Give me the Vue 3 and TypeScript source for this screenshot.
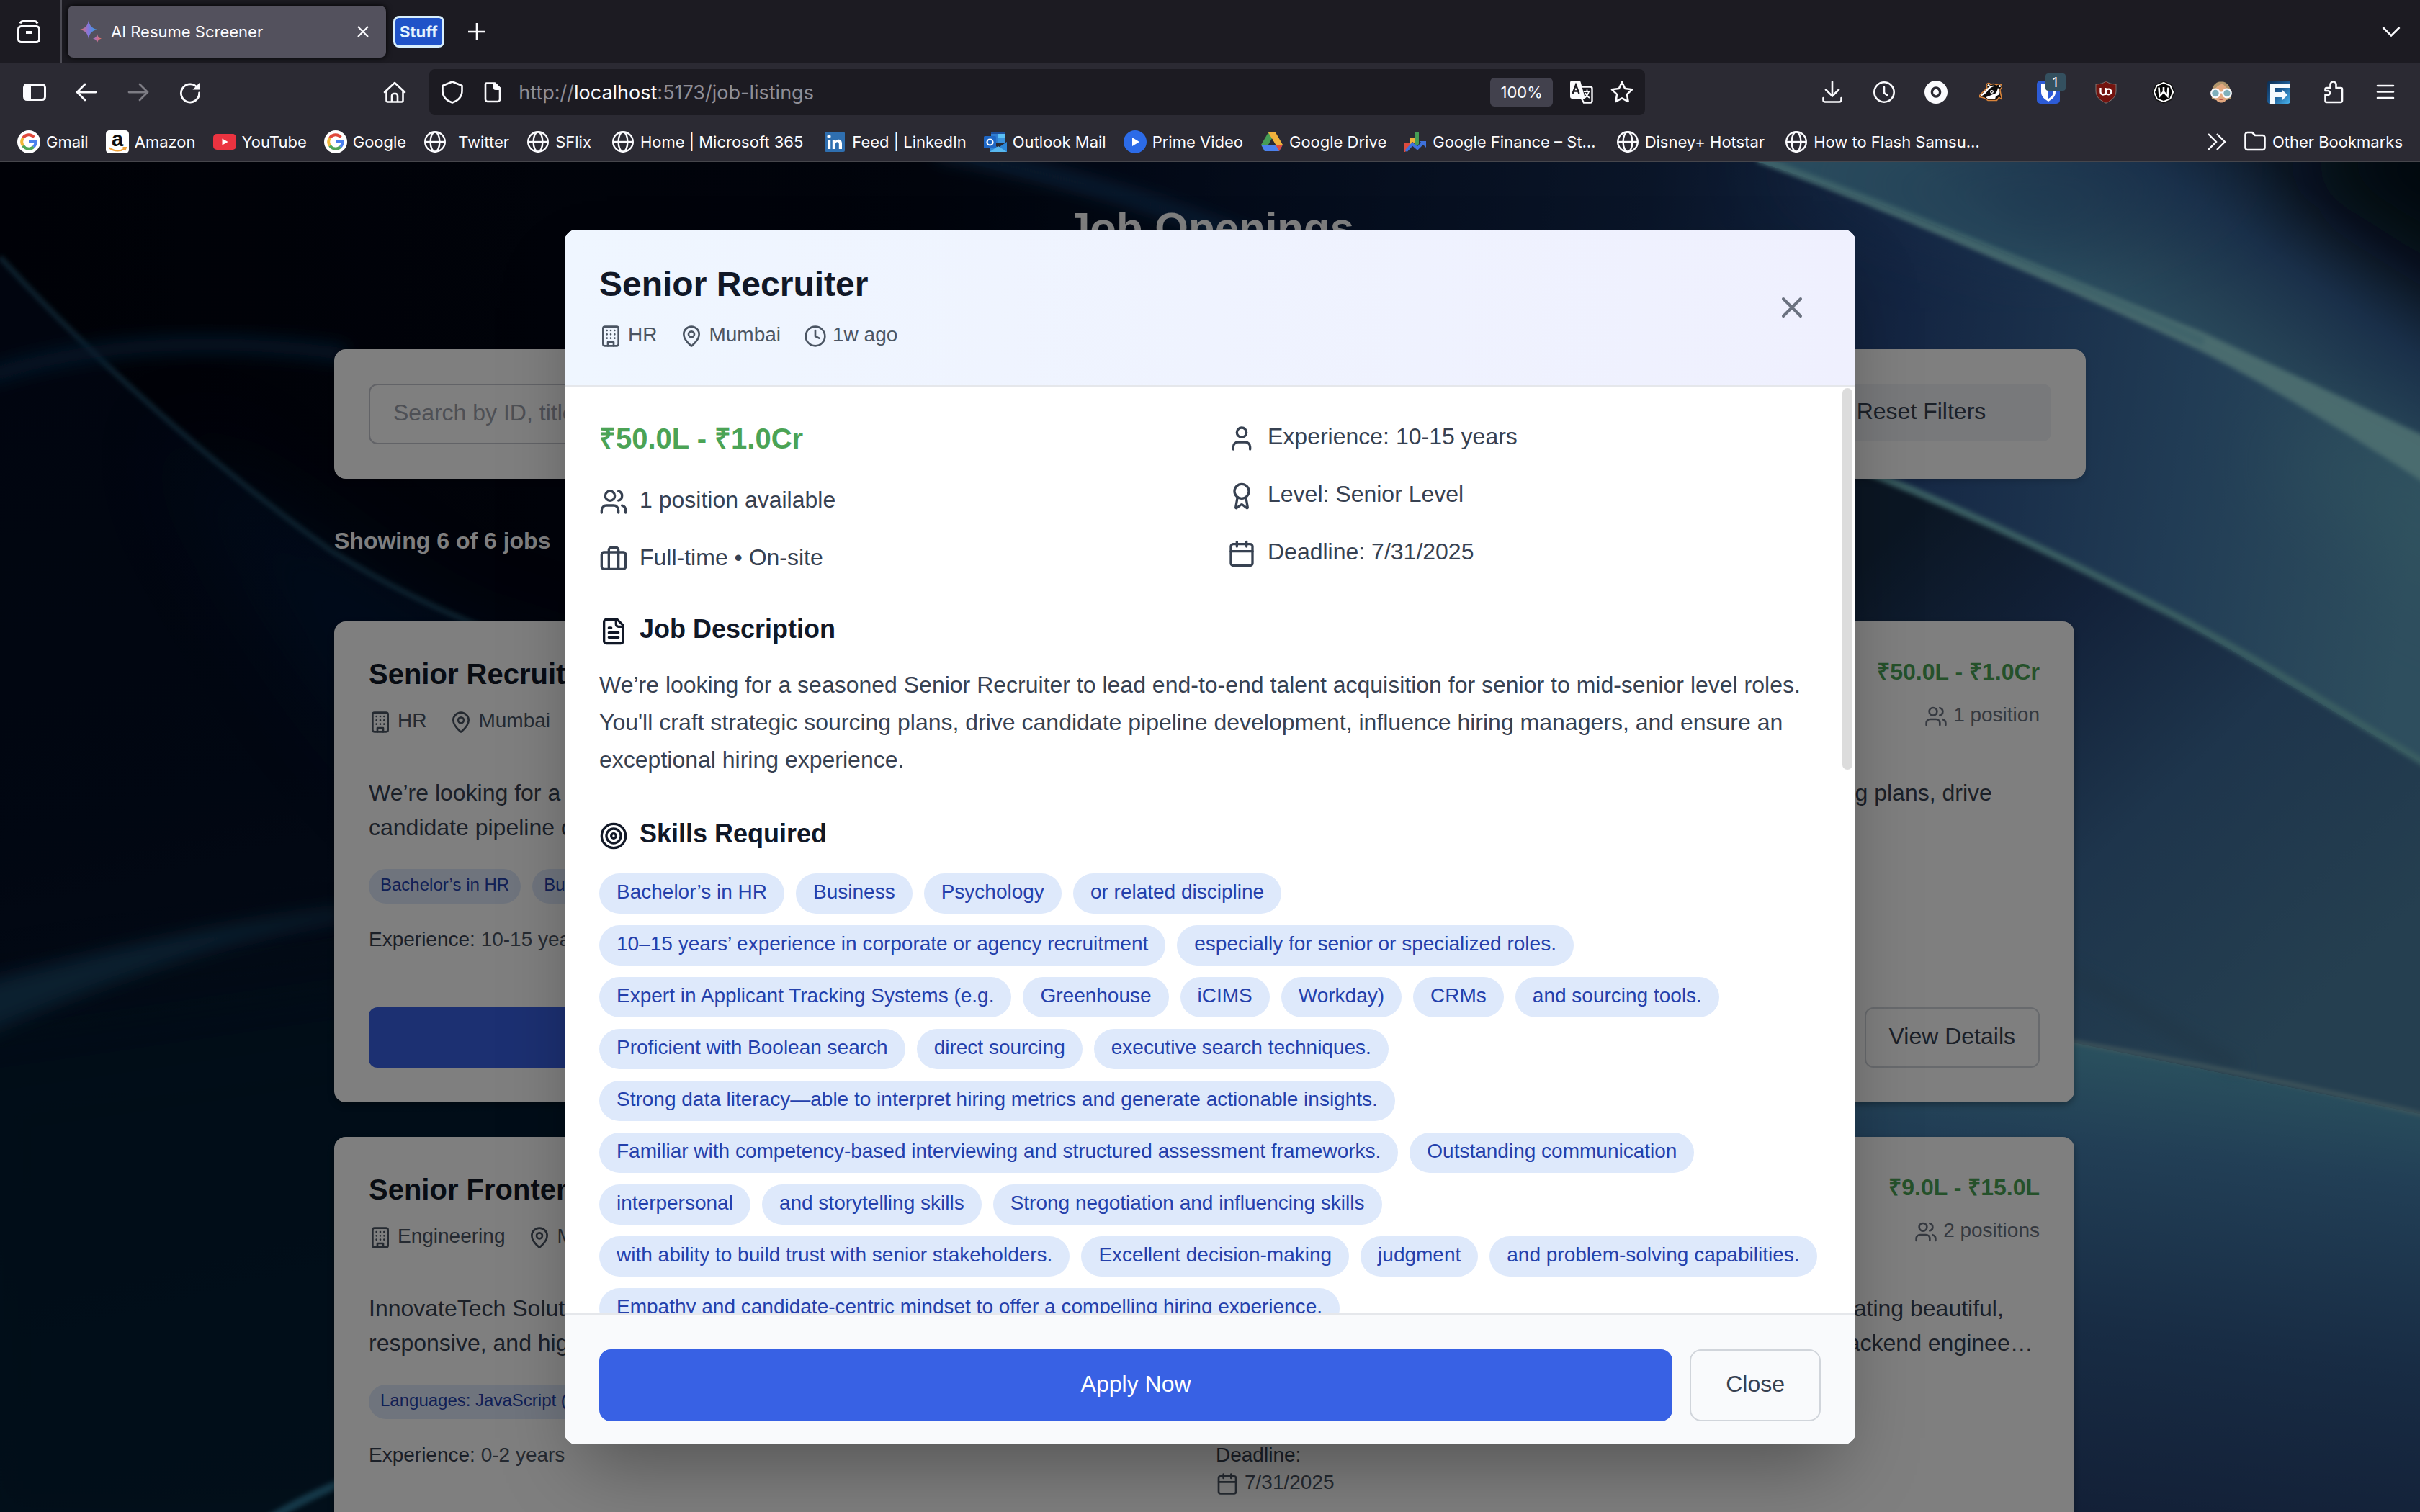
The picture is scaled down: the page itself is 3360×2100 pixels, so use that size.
<script setup lang="ts">
import { ref } from 'vue'

interface Bookmark {
  label: string
  icon: string
  wide?: boolean
  trail?: boolean
}

interface Job {
  title: string
  department: string
  location: string
  salary: string
  positions: string
  summary: string
  skills: string[]
  experience: string
  deadline: string
}

const globe =
  '<g fill="none" stroke="#fbfbfe" stroke-width="2.4"><circle cx="16" cy="16" r="13.8"/><ellipse cx="16" cy="16" rx="6.4" ry="13.8"/><path d="M2.5 16h27"/></g>'
const googleG =
  '<circle cx="16" cy="16" r="16" fill="#fff"/><g fill="none" stroke-width="4"><path d="M23.2 9.6A9.6 9.6 0 0 0 8 10.6" stroke="#e0493b"/><path d="M8 10.6a9.6 9.6 0 0 0 0 10.8" stroke="#f2b83a"/><path d="M8 21.4a9.6 9.6 0 0 0 14.6 1.6" stroke="#4fa658"/><path d="M22.6 23a9.6 9.6 0 0 0 3-7H16" stroke="#4a80ee"/></g>'

const bookmarks: Bookmark[] = [
  { label: 'Gmail', icon: googleG },
  {
    label: 'Amazon',
    icon: '<rect width="32" height="32" rx="5" fill="#fff"/><text x="16" y="22" text-anchor="middle" font-family="Liberation Sans, sans-serif" font-weight="700" font-size="29" fill="#0d0d0d">a</text><path d="M5 24.500c7 5 15 5 21 1" fill="none" stroke="#f0a138" stroke-width="2.400"/><path d="M23.500 24h4.500l-1.500 4" fill="none" stroke="#f0a138" stroke-width="2"/>',
  },
  {
    label: 'YouTube',
    icon: '<rect y="5" width="32" height="22" rx="5" fill="#eb3340"/><path d="M12.500 11.500v9l8-4.500z" fill="#fff"/>',
  },
  { label: 'Google', icon: googleG },
  { label: 'Twitter', icon: globe, wide: true },
  { label: 'SFlix', icon: globe, trail: true },
  { label: 'Home | Microsoft 365', icon: globe, trail: true },
  {
    label: 'Feed | LinkedIn',
    icon: '<rect x="2" y="2" width="28" height="28" rx="2" fill="#2f6fb0"/><g fill="#fff"><circle cx="8" cy="8.500" r="2.500"/><path d="M6 13h4.200v13H6zM12.800 13h4v1.900c2.300-3.600 9.200-3 9.200 3.300V26h-4.200v-7c0-4-4.800-3.600-4.800 0v7h-4.200z"/></g>',
  },
  {
    label: 'Outlook Mail',
    icon: '<path d="M10 2h20v8H10z" fill="#1d4f9c"/><path d="M10 5h10v12H10z" fill="#2f7cd0"/><path d="M20 5h10v6H20z" fill="#5cc0f5"/><path d="M20 11h10v6H20z" fill="#3a93dd"/><path d="M8 17l12 7 12-8v14H8z" fill="#2d86d6"/><path d="M8 30l12-8 12 8z" fill="#58b7ee"/><rect y="8" width="17" height="17" rx="1.500" fill="#1f67c5"/><circle cx="8.500" cy="16.500" r="4" fill="none" stroke="#fff" stroke-width="2.200"/>',
  },
  {
    label: 'Prime Video',
    icon: '<circle cx="16" cy="16" r="16" fill="#2c6be8"/><path d="M12 10v12l10-6z" fill="#fff"/>',
  },
  {
    label: 'Google Drive',
    icon: '<path d="M11 3h10l-5 9L6 29 1 20z" fill="#469d55"/><path d="M11 3h10l10 17H21z" fill="#f0b13c"/><path d="M1 20h30l-5 9H6z" fill="#4b80ec"/><path d="M21 20h10l-5 9z" fill="#dd4b3e"/><path d="M16 11.500L21 20H11z" fill="#2b2a33"/>',
  },
  {
    label: 'Google Finance – St…',
    icon: '<path d="M1 17h7v7l-6 6H1z" fill="#dd4b3e"/><path d="M8.500 10H15v8l-3-2-3.500 6z" fill="#f0b13c"/><path d="M15 3h6v16l-3 3-3-3z" fill="#469d55"/><path d="M3 29l9-10 7 6 8-8" fill="none" stroke="#3e71dc" stroke-width="4"/><path d="M22 15h9v9z" fill="#3e71dc"/>',
    trail: true,
  },
  { label: 'Disney+ Hotstar', icon: globe, trail: true },
  { label: 'How to Flash Samsu…', icon: globe },
]

/** Outline glyphs on a 24 unit grid. */
const glyphs: Record<string, string> = {
  building:
    '<rect width="16" height="20" x="4" y="2" rx="2"/><path d="M9 22v-4h6v4"/><path d="M8 6h.01M16 6h.01M12 6h.01M12 10h.01M12 14h.01M16 10h.01M16 14h.01M8 10h.01M8 14h.01"/>',
  pin: '<path d="M20 10c0 4.993-5.539 10.193-7.399 11.799a1 1 0 0 1-1.202 0C9.539 20.193 4 14.993 4 10a8 8 0 0 1 16 0"/><circle cx="12" cy="10" r="3"/>',
  clock: '<circle cx="12" cy="12" r="10"/><path d="M12 6v6l4 2"/>',
  users:
    '<path d="M16 21v-2a4 4 0 0 0-4-4H6a4 4 0 0 0-4 4v2"/><circle cx="9" cy="7" r="4"/><path d="M22 21v-2a4 4 0 0 0-3-3.870"/><path d="M16 3.130a4 4 0 0 1 0 7.750"/>',
  briefcase:
    '<path d="M16 20V4a2 2 0 0 0-2-2h-4a2 2 0 0 0-2 2v16"/><rect width="20" height="14" x="2" y="6" rx="2"/>',
  user: '<path d="M19 21v-2a4 4 0 0 0-4-4H9a4 4 0 0 0-4 4v2"/><circle cx="12" cy="7" r="4"/>',
  award:
    '<path d="m15.477 12.890 1.515 8.526a.5.5 0 0 1-.81.470l-3.580-2.687a1 1 0 0 0-1.197 0l-3.586 2.686a.5.5 0 0 1-.81-.469l1.514-8.526"/><circle cx="12" cy="8" r="6"/>',
  calendar: '<path d="M8 2v4M16 2v4"/><rect width="18" height="18" x="3" y="4" rx="2"/><path d="M3 10h18"/>',
  file: '<path d="M15 2H6a2 2 0 0 0-2 2v16a2 2 0 0 0 2 2h12a2 2 0 0 0 2-2V7Z"/><path d="M14 2v4a2 2 0 0 0 2 2h4M10 9H8M16 13H8M16 17H8"/>',
  target: '<circle cx="12" cy="12" r="10"/><circle cx="12" cy="12" r="6"/><circle cx="12" cy="12" r="2"/>',
  close: '<path d="M18 6 6 18M6 6l12 12"/>',
}

const facts = [
  { icon: 'user', text: 'Experience: 10-15 years' },
  { icon: 'award', text: 'Level: Senior Level' },
  { icon: 'calendar', text: 'Deadline: 7/31/2025' },
]

const description =
  "We’re looking for a seasoned Senior Recruiter to lead end-to-end talent acquisition for senior to mid-senior level roles. You'll craft strategic sourcing plans, drive candidate pipeline development, influence hiring managers, and ensure an exceptional hiring experience."

const skills = [
  'Bachelor’s in HR',
  'Business',
  'Psychology',
  'or related discipline',
  '10–15 years’ experience in corporate or agency recruitment',
  'especially for senior or specialized roles.',
  'Expert in Applicant Tracking Systems (e.g.',
  'Greenhouse',
  'iCIMS',
  'Workday)',
  'CRMs',
  'and sourcing tools.',
  'Proficient with Boolean search',
  'direct sourcing',
  'executive search techniques.',
  'Strong data literacy—able to interpret hiring metrics and generate actionable insights.',
  'Familiar with competency-based interviewing and structured assessment frameworks.',
  'Outstanding communication',
  'interpersonal',
  'and storytelling skills',
  'Strong negotiation and influencing skills',
  'with ability to build trust with senior stakeholders.',
  'Excellent decision-making',
  'judgment',
  'and problem-solving capabilities.',
  'Empathy and candidate-centric mindset to offer a compelling hiring experience.',
]

const jobs: Job[] = [
  {
    title: 'Senior Recruiter',
    department: 'HR',
    location: 'Mumbai',
    salary: '₹50.0L - ₹1.0Cr',
    positions: '1 position',
    summary: description,
    skills: ['Bachelor’s in HR', 'Business', 'Psychology'],
    experience: '10-15 years',
    deadline: '7/31/2025',
  },
  {
    title: 'Senior Frontend Developer',
    department: 'Engineering',
    location: 'Mumbai',
    salary: '₹9.0L - ₹15.0L',
    positions: '2 positions',
    summary:
      'InnovateTech Solutions is looking for a talented and passionate Senior Frontend Developer to join our growing product team. You will focus on creating beautiful, responsive, and high-performance web applications, collaborating closely with our talented product managers, analysts, product designers, and backend engineers to deliver features.',
    skills: ['Languages: JavaScript (ES6+)', 'TypeScript'],
    experience: '0-2 years',
    deadline: '7/31/2025',
  },
]

const query = ref('')
</script>

<template>
  <div class="browser">
    <header class="chrome">
      <div class="tabs">
        <button class="view-btn" aria-label="Recent browsing">
          <svg width="32" height="32" viewBox="0 0 32 32" fill="none" stroke="#fbfbfe" stroke-width="3">
            <rect x="1.500" y="8.500" width="29" height="22" rx="4" />
            <path d="M4 4.500C5 2 6 1.500 8 1.500h16c2 0 3 .5 4 3" />
            <path d="M12 17h8" stroke-width="4" />
          </svg>
        </button>
        <div class="tab">
          <svg width="32" height="32" viewBox="0 0 32 32">
            <defs>
              <linearGradient id="spark"><stop offset="0" stop-color="#e8705c" /><stop offset=".45" stop-color="#8a74d8" /><stop offset=".8" stop-color="#4a90e0" /></linearGradient>
              <linearGradient id="spark2"><stop offset="0" stop-color="#9a70d0" /><stop offset="1" stop-color="#e8705c" /></linearGradient>
            </defs>
            <path d="M13 0c1.500 8 4 11 12 13-8 2-10.500 5-12 13C11.500 18 9 15 1 13 9 11 11.500 8 13 0z" fill="url(#spark)" />
            <path d="M25 19c.8 4 2 5.500 6 6.500-4 1-5.200 2.500-6 6.500-.8-4-2-5.500-6-6.500 4-1 5.200-2.500 6-6.500z" fill="url(#spark2)" />
          </svg>
          <span class="tab-title">AI Resume Screener</span>
          <button aria-label="Close tab">
            <svg width="16" height="16" viewBox="0 0 16 16" fill="none" stroke="#fbfbfe" stroke-width="2.200"><path d="M1 1l14 14M15 1L1 15" /></svg>
          </button>
        </div>
        <button class="group">Stuff</button>
        <button class="new-tab" aria-label="New tab">
          <svg width="24" height="24" viewBox="0 0 24 24" fill="none" stroke="#fbfbfe" stroke-width="2.600"><path d="M12 0v24M0 12h24" /></svg>
        </button>
        <button class="all-tabs" aria-label="List all tabs">
          <svg width="26" height="16" viewBox="0 0 26 16" fill="none" stroke="#fbfbfe" stroke-width="2.600"><path d="M1.500 2l11.500 11.500L24.500 2" /></svg>
        </button>
      </div>

      <div class="nav">
        <button class="tool" aria-label="Sidebars">
          <svg width="32" height="32" viewBox="0 0 32 32"><rect x="1.500" y="5.500" width="29" height="21" rx="4" fill="none" stroke="#fbfbfe" stroke-width="3" /><path d="M2 5h9v22H5l-3-3z" fill="#fbfbfe" /></svg>
        </button>
        <button class="tool" aria-label="Back">
          <svg width="32" height="32" viewBox="0 0 32 32" fill="none" stroke="#fbfbfe" stroke-width="2.800" stroke-linecap="round" stroke-linejoin="round"><path d="M29 16H3M14 5L3 16l11 11" /></svg>
        </button>
        <button class="tool" aria-label="Forward">
          <svg width="32" height="32" viewBox="0 0 32 32" fill="none" stroke="#7d7c84" stroke-width="2.800" stroke-linecap="round" stroke-linejoin="round"><path d="M3 16h26M18 5l11 11-11 11" /></svg>
        </button>
        <button class="tool" aria-label="Reload">
          <svg width="32" height="32" viewBox="0 0 32 32"><path d="M26.500 10.500A12.600 12.600 0 1 0 28.600 17" fill="none" stroke="#fbfbfe" stroke-width="2.800" stroke-linecap="round" /><path d="M30 2v10.500H19.500z" fill="#fbfbfe" /></svg>
        </button>
        <span class="spring"></span>
        <button class="tool home" aria-label="Home">
          <svg width="32" height="32" viewBox="0 0 32 32" fill="none" stroke="#fbfbfe" stroke-width="2.600" stroke-linejoin="round" stroke-linecap="round"><path d="M2 16L16 3l14 13M4.500 14v13.500a2 2 0 0 0 2 2h19a2 2 0 0 0 2-2V14M12 29V21a3 3 0 0 1 3-3h2a3 3 0 0 1 3 3v8" /></svg>
        </button>
        <div class="url">
          <svg width="32" height="32" viewBox="0 0 32 32" fill="none" stroke="#fbfbfe" stroke-width="2.600" stroke-linejoin="round"><path d="M16 1.500L29.500 7v7c0 8-5 13.500-13.500 16.500C7.500 27.500 2.500 22 2.500 14V7z" /></svg>
          <svg width="32" height="32" viewBox="0 0 32 32"><path d="M7 3.500h12l7 7V26a3 3 0 0 1-3 3H9a3 3 0 0 1-3-3V5z" fill="none" stroke="#fbfbfe" stroke-width="2.600" stroke-linejoin="round" /><path d="M17 3h3l7 7v3h-7a3 3 0 0 1-3-3z" fill="#fbfbfe" /></svg>
          <span class="address">http://<b>localhost</b>:5173/job-listings</span>
          <button class="zoom">100%</button>
          <svg width="32" height="32" viewBox="0 0 32 32"><path d="M3 0h9a3 3 0 0 1 2.500 1.500L21 25H3a3 3 0 0 1-3-3V3a3 3 0 0 1 3-3z" fill="#fbfbfe" /><path d="M3.500 18L8 6l4.500 12M5 14.500h6" fill="none" stroke="#1c1b22" stroke-width="2.400" /><path d="M17 8.500h11a2.500 2.500 0 0 1 2.500 2.500v17a2.500 2.500 0 0 1-2.500 2.500H19L16 25" fill="none" stroke="#fbfbfe" stroke-width="2.400" /><path d="M19 15h9M23.500 12.500V15M26 15c-1 4-3 7-6 9M21 17c1 3 3 5 6 7" fill="none" stroke="#fbfbfe" stroke-width="1.800" /></svg>
          <svg class="star" width="32" height="32" viewBox="0 0 32 32" fill="none" stroke="#fbfbfe" stroke-width="2.600" stroke-linejoin="round"><path d="M16 2l4.200 9 9.800 1.300-7.100 6.800 1.700 9.900-8.600-4.700L7.400 29l1.700-9.900L2 12.300 11.800 11z" /></svg>
        </div>
        <span class="spring"></span>
        <div class="tools">
          <button class="tool" aria-label="Downloads">
            <svg width="32" height="32" viewBox="0 0 32 32" fill="none" stroke="#fbfbfe" stroke-width="2.600" stroke-linecap="round" stroke-linejoin="round"><path d="M16 1.500v19M7 12.500l9 9 9-9M3.500 24v3a2.500 2.500 0 0 0 2.500 2.500h20a2.500 2.500 0 0 0 2.500-2.500v-3" /></svg>
          </button>
          <button class="tool" aria-label="History">
            <svg width="32" height="32" viewBox="0 0 32 32" fill="none" stroke="#fbfbfe" stroke-width="2.600" stroke-linecap="round"><circle cx="16" cy="16" r="13.700" /><path d="M16 9v8l4.500 3.500" /></svg>
          </button>
          <button class="tool" aria-label="Account">
            <svg width="32" height="32" viewBox="0 0 32 32"><circle cx="16" cy="16" r="16" fill="#fbfbfe" /><ellipse cx="16" cy="16" rx="5.600" ry="6" fill="none" stroke="#2b2a33" stroke-width="3.400" /></svg>
          </button>
          <button class="tool ext" aria-label="Privacy Badger">
            <svg width="32" height="32" viewBox="0 0 32 32"><path d="M10 7c0-4 4-4.500 6-1.500 3-1.500 6-1 8 .5 2-2 7-2 7.500 1.500.3 3-2 4-2.500 5l1 7 1.500 6.500-4-3-3 4.500H12L7 24l-6.500-1.500C-.5 20 2 19 5 16l6-6z" fill="#0d0d0d" stroke="#d9843b" stroke-width="1.500" /><path d="M2 20.500L12 10c4-3 7-4 11-2.500-4 .5-7 2-10 5-3 4-6 8-11 9z" fill="#fff" /><path d="M12 22c3-1 6-3 8-3 4-1 5-5 6-9 2 2 3 5 2 9l-5 3-1 4h-9l-4-3z" fill="#fff" /><circle cx="13" cy="6.500" r="1.600" fill="#fff" /><circle cx="28.500" cy="7.500" r="1.600" fill="#fff" /><circle cx="17.500" cy="15.500" r="2.400" fill="#fff" /><circle cx="17.500" cy="15.500" r="1.100" fill="#111" /></svg>
          </button>
          <button class="tool ext" aria-label="Bitwarden">
            <svg width="32" height="32" viewBox="0 0 32 32"><rect width="32" height="32" rx="5" fill="#2c5bd6" /><path d="M6 4h20v12c0 6-5 10-10 13C11 26 6 22 6 16z" fill="#fff" /><path d="M16 7.500h7V16c0 4-3.500 7-7 9z" fill="#2c5bd6" /></svg>
            <span class="badge">1</span>
          </button>
          <button class="tool ext" aria-label="uBlock Origin">
            <svg width="32" height="32" viewBox="0 0 32 32"><path d="M16 .8C20 4 25 5 30 5v9c0 9-6 13.500-14 17.200C8 27.500 2 23 2 14V5c5 0 10-1 14-4.200z" fill="#74140f" stroke="#8c8a88" stroke-width=".8" /><path d="M8.500 10v6a3.500 3.500 0 0 0 7 0v-6M15.500 16v4" fill="none" stroke="#fff" stroke-width="2.300" /><circle cx="19.500" cy="15.500" r="3.800" fill="none" stroke="#fff" stroke-width="2.300" /></svg>
          </button>
          <button class="tool ext" aria-label="Web archive">
            <svg width="32" height="32" viewBox="0 0 32 32"><path d="M16 1l10.500 4.500L31 16l-4.500 10.500L16 31 5.500 26.500 1 16 5.500 5.500z" fill="#fff" stroke="#111" stroke-width="1.500" /><path d="M16 4l8.500 3.500L28 16l-3.500 8.500L16 28l-8.500-3.500L4 16l3.500-8.500z" fill="#050505" /><path d="M9.500 9.500l1 12 5.500-6 5.500 6 1-12M16 9v7" fill="none" stroke="#fff" stroke-width="2.600" /></svg>
          </button>
          <button class="tool ext" aria-label="Avatar">
            <svg width="32" height="32" viewBox="0 0 32 32"><path d="M3 25C1 8 8 1 16 1.500 24 1 31 8 29 25l-5 2H8z" fill="#b0956c" /><path d="M7 14C9 7 14 6 18 4c2 3 6 5 7 10v9c-2 5-5 7.500-9 7.500S9 28 7 23z" fill="#e2a87f" /><path d="M12.500 26c2 1.200 5 1.200 7 0z" fill="#b54848" /><g fill="#7fb0bb" stroke="#fbfbfe" stroke-width="2.200"><circle cx="8" cy="17.500" r="5.800" /><circle cx="24" cy="17.500" r="5.800" /></g><path d="M13.500 16.500h5" stroke="#fbfbfe" stroke-width="2.200" /></svg>
          </button>
          <button class="tool ext" aria-label="Forward">
            <svg width="32" height="32" viewBox="0 0 32 32"><defs><linearGradient id="fx" x1="0" y1="0" x2="1" y2="1"><stop offset="0" stop-color="#0c2c50" /><stop offset=".5" stop-color="#1c5a93" /><stop offset="1" stop-color="#4ab6f0" /></linearGradient></defs><rect width="32" height="32" rx="4" fill="url(#fx)" /><path d="M4 5h27v5H11v6h9v-4l8 8-8 8v-5h-9v9H4z" fill="#f5fafe" /></svg>
          </button>
          <button class="tool" aria-label="Extensions">
            <svg width="32" height="32" viewBox="0 0 32 32" fill="none" stroke="#fbfbfe" stroke-width="2.600" stroke-linejoin="round"><path d="M4.500 19.500V28a2 2 0 0 0 2 2h19a2.500 2.500 0 0 0 2.500-2.500V12a2 2 0 0 0-2-2h-6.500V5.500a4 4 0 0 0-8 0V10H6.500a2 2 0 0 0-2 2v2H8a3 3 0 0 1 0 6z" /></svg>
          </button>
          <button class="tool" aria-label="Menu">
            <svg width="32" height="32" viewBox="0 0 32 32" fill="none" stroke="#fbfbfe" stroke-width="2.600" stroke-linecap="round"><path d="M5 7h22M5 15.500h22M5 24h22" /></svg>
          </button>
        </div>
      </div>

      <nav class="bookmarks">
        <a v-for="b in bookmarks" :key="b.label" href="#" :class="{ wide: b.wide, trail: b.trail }">
          <svg width="32" height="32" viewBox="0 0 32 32" v-html="b.icon"></svg>
          <span>{{ b.label }}</span>
        </a>
        <button class="more" aria-label="More bookmarks">
          <svg width="26" height="24" viewBox="0 0 26 24" fill="none" stroke="#fbfbfe" stroke-width="2.400"><path d="M1 1l11 11L1 23M13 1l11 11-11 11" /></svg>
        </button>
        <a href="#" class="other">
          <svg width="32" height="32" viewBox="0 0 32 32" fill="none" stroke="#fbfbfe" stroke-width="2.600"><path d="M2.500 6a3 3 0 0 1 3-3h6.500l4 4h10.500a3 3 0 0 1 3 3v14a3 3 0 0 1-3 3h-21a3 3 0 0 1-3-3z" /></svg>
          <span>Other Bookmarks</span>
        </a>
      </nav>
    </header>

    <div class="page">
      <svg class="backdrop-art" viewBox="0 225 3360 1875" preserveAspectRatio="none" aria-hidden="true">
        <defs>
          <linearGradient id="base" x1="0" y1="0" x2="1" y2="0"><stop offset="0" stop-color="#01030e" /><stop offset=".38" stop-color="#020818" /><stop offset=".62" stop-color="#0b2244" /><stop offset="1" stop-color="#1c3c58" /></linearGradient>
          <linearGradient id="leftlow" x1="0" y1="0" x2=".2" y2="1"><stop offset="0" stop-color="#020a1e" /><stop offset=".45" stop-color="#030e24" /><stop offset="1" stop-color="#0e2238" /></linearGradient>
          <linearGradient id="upper" gradientUnits="userSpaceOnUse" x1="2950" y1="440" x2="3120" y2="200"><stop offset="0" stop-color="#589cbe" /><stop offset=".3" stop-color="#4a82aa" /><stop offset=".65" stop-color="#346094" /><stop offset="1" stop-color="#1a3454" /></linearGradient>
          <linearGradient id="mid" gradientUnits="userSpaceOnUse" x1="1500" y1="400" x2="3360" y2="700"><stop offset="0" stop-color="#04102a" /><stop offset=".4" stop-color="#142a50" /><stop offset=".6" stop-color="#284a84" /><stop offset=".82" stop-color="#4278aa" /><stop offset="1" stop-color="#5c9cbc" /></linearGradient>
          <linearGradient id="low" gradientUnits="userSpaceOnUse" x1="2600" y1="760" x2="3200" y2="1400"><stop offset="0" stop-color="#162c46" /><stop offset=".3" stop-color="#264474" /><stop offset=".6" stop-color="#3c6a98" /><stop offset="1" stop-color="#4a7ea0" /></linearGradient>
          <linearGradient id="bottom" gradientUnits="userSpaceOnUse" x1="3080" y1="1480" x2="3000" y2="2120"><stop offset="0" stop-color="#54a0bc" /><stop offset=".2" stop-color="#447eac" /><stop offset=".6" stop-color="#305888" /><stop offset="1" stop-color="#26406e" /></linearGradient>
          <filter id="s2" x="-10%" y="-10%" width="120%" height="120%"><feGaussianBlur stdDeviation="3" /></filter>
          <filter id="s8" x="-20%" y="-60%" width="140%" height="220%"><feGaussianBlur stdDeviation="12" /></filter>
          <filter id="s60" x="-60%" y="-60%" width="220%" height="220%"><feGaussianBlur stdDeviation="60" /></filter>
        </defs>
        <rect y="225" width="3360" height="1875" fill="url(#base)" />
        <path d="M0 357C130 500 300 650 460 765C580 840 700 890 900 950L1400 1130V2100H0z" fill="url(#leftlow)" />
        <path d="M240 600L620 870 900 960V1250C700 1240 480 1100 240 600z" fill="#04204c" opacity=".5" filter="url(#s60)" />
        <path d="M-100 1440C200 1400 500 1350 900 1300V2200H-100z" fill="#061a30" opacity=".7" filter="url(#s60)" />
        <path d="M0 357C130 500 300 650 460 765C580 840 700 890 900 950" fill="none" stroke="#1c4660" stroke-width="7" filter="url(#s2)" />
        <path d="M-20 524C140 470 320 470 480 492" fill="none" stroke="#0a3056" stroke-width="20" filter="url(#s8)" />
        <path d="M-30 1366C160 1315 330 1280 480 1262v14C330 1300 150 1360-30 1440z" fill="#15405e" filter="url(#s8)" />
        <path d="M300 2160C380 2100 440 2072 520 2040" fill="none" stroke="#2a7090" stroke-width="12" filter="url(#s2)" />
        <path d="M2440 225H3360V620C3240 560 3140 510 3050 470C2900 400 2650 290 2440 225z" fill="url(#upper)" />
        <path d="M1340 225H2440C2650 290 2900 400 3050 470C3140 510 3240 560 3360 620V1058C3240 990 3120 915 2994 842C2880 785 2750 720 2620 665C2300 540 1900 370 1340 225z" fill="url(#mid)" />
        <path d="M2440 225h700l-300 130z" fill="#32649a" opacity=".7" filter="url(#s60)" />
        <path d="M3260 140H3480V440C3440 400 3340 340 3180 240z" fill="#040c18" filter="url(#s60)" />
        <path d="M3140 640C3240 680 3300 720 3440 860V700L3240 600z" fill="#6cbcc4" opacity=".4" filter="url(#s60)" />
        <path d="M2300 540L2620 665C2750 720 2880 785 2994 842C3120 915 3240 990 3360 1058V1547L2880 1448H2300z" fill="url(#low)" />
        <path d="M2300 1400H2700L2880 1448 3360 1547V2100H2300z" fill="url(#bottom)" />
        <path d="M1300 210C1440 235 1600 275 1760 345" fill="none" stroke="#1a4a78" stroke-width="16" filter="url(#s8)" />
        <path d="M2440 216C2640 290 2900 398 3060 462L3380 612V680C3260 600 3120 520 3060 490S2640 298 2440 224z" fill="#98dce0" opacity=".95" filter="url(#s2)" />
        <path d="M2440 220C2640 290 2900 402 3060 475" fill="none" stroke="#6cb8cc" stroke-width="12" opacity=".5" filter="url(#s2)" />
        <path d="M2540 635C2740 710 2880 785 2994 842C3120 905 3250 990 3380 1068" fill="none" stroke="#74bcc4" stroke-width="10" filter="url(#s2)" />
        <path d="M2860 1345C2960 1390 3020 1440 3110 1482" fill="none" stroke="#3f6a8a" stroke-width="12" filter="url(#s8)" />
        <path d="M2860 1444C3040 1475 3220 1512 3380 1552" fill="none" stroke="#8cb6bc" stroke-width="5" filter="url(#s2)" />
      </svg>

      <main class="content">
        <h1>Job Openings</h1>

        <form class="filters" @submit.prevent>
          <input v-model="query" type="text" aria-label="Search jobs" placeholder="Search by ID, title, skills..." />
          <button type="reset">Reset Filters</button>
        </form>

        <p class="count">Showing 6 of 6 jobs</p>

        <div class="list">
          <article v-for="job in jobs" :key="job.title" class="card">
            <div class="card-top">
              <div>
                <h3>{{ job.title }}</h3>
                <div class="meta">
                  <span><svg class="ico sm" viewBox="0 0 24 24" v-html="glyphs.building"></svg><em>{{ job.department }}</em></span>
                  <span><svg class="ico sm" viewBox="0 0 24 24" v-html="glyphs.pin"></svg><em>{{ job.location }}</em></span>
                </div>
              </div>
              <div class="pay">
                <strong>{{ job.salary }}</strong>
                <span class="openings"><svg class="ico sm" viewBox="0 0 24 24" v-html="glyphs.users"></svg><em>{{ job.positions }}</em></span>
              </div>
            </div>
            <p class="summary">{{ job.summary }}</p>
            <ul class="tags">
              <li v-for="s in job.skills" :key="s">{{ s }}</li>
            </ul>
            <div class="details">
              <div><b>Experience:</b> {{ job.experience }}</div>
              <div>
                <b>Deadline:</b>
                <span class="date"><svg class="ico sm" viewBox="0 0 24 24" v-html="glyphs.calendar"></svg><em>{{ job.deadline }}</em></span>
              </div>
            </div>
            <div class="actions">
              <button class="apply">Apply Now</button>
              <button class="outline">View Details</button>
            </div>
          </article>
        </div>
      </main>

      <div class="overlay">
        <section class="modal" role="dialog" aria-labelledby="modal-title">
          <header class="modal-head">
            <div>
              <h2 id="modal-title">Senior Recruiter</h2>
              <div class="meta">
                <span><svg class="ico sm" viewBox="0 0 24 24" v-html="glyphs.building"></svg><em>HR</em></span>
                <span><svg class="ico sm" viewBox="0 0 24 24" v-html="glyphs.pin"></svg><em>Mumbai</em></span>
                <span><svg class="ico sm" viewBox="0 0 24 24" v-html="glyphs.clock"></svg><em>1w ago</em></span>
              </div>
            </div>
            <button class="dismiss" aria-label="Close dialog"><svg class="ico lg" viewBox="0 0 24 24" v-html="glyphs.close"></svg></button>
          </header>

          <div class="modal-body">
            <div class="facts">
              <div>
                <p class="salary">₹50.0L - ₹1.0Cr</p>
                <p class="fact"><svg class="ico" viewBox="0 0 24 24" v-html="glyphs.users"></svg><em>1 position available</em></p>
                <p class="fact"><svg class="ico" viewBox="0 0 24 24" v-html="glyphs.briefcase"></svg><em>Full-time • On-site</em></p>
              </div>
              <div>
                <p v-for="f in facts" :key="f.icon" class="fact"><svg class="ico" viewBox="0 0 24 24" v-html="glyphs[f.icon]"></svg><em>{{ f.text }}</em></p>
              </div>
            </div>

            <h3><svg class="ico" viewBox="0 0 24 24" v-html="glyphs.file"></svg><span>Job Description</span></h3>
            <p class="description">{{ description }}</p>

            <h3><svg class="ico" viewBox="0 0 24 24" v-html="glyphs.target"></svg><span>Skills Required</span></h3>
            <ul class="skills">
              <li v-for="s in skills" :key="s">{{ s }}</li>
            </ul>
            <span class="thumb"></span>
          </div>

          <footer class="modal-foot">
            <button class="apply">Apply Now</button>
            <button class="outline">Close</button>
          </footer>
        </section>
      </div>
    </div>
  </div>
</template>

<style>
html,
body {
  margin: 0;
  background: #01030e;
}
</style>

<style scoped>
.browser {
  display: flex;
  flex-direction: column;
  height: 100vh;
  overflow: hidden;
  font-family: 'Liberation Sans', Arial, sans-serif;
}
.browser * {
  box-sizing: border-box;
}
svg {
  display: block;
  flex: none;
}
button {
  margin: 0;
  padding: 0;
  border: 0;
  background: none;
  font: inherit;
  color: inherit;
  cursor: pointer;
}
h1,
h2,
h3,
p,
ul {
  margin: 0;
  padding: 0;
  list-style: none;
}
em {
  font-style: normal;
}

/* Browser chrome */
.chrome {
  flex: none;
  background: #2b2a33;
  border-bottom: 1px solid #46464c;
  color: #fbfbfe;
  font-family: Inter, 'Liberation Sans', sans-serif;
  font-size: 22px;
}
.tabs {
  display: flex;
  align-items: center;
  height: 88px;
  background: #1c1b22;
}
.view-btn {
  height: 88px;
  padding: 0 28px 0 24px;
  border-right: 2px solid #4c4b54;
}
.tab {
  display: flex;
  align-items: center;
  gap: 12px;
  width: 442px;
  height: 72px;
  margin-left: 8px;
  padding: 0 24px 0 16px;
  border-radius: 8px;
  background: #53515d;
  box-shadow: 0 0 8px #000;
}
.tab-title {
  flex: 1;
}
.group {
  height: 44px;
  margin-left: 10px;
  padding: 0 6px;
  border: 3px solid #d8effc;
  border-radius: 8px;
  background: #2053c8;
  color: #e4f4fe;
  font-weight: 700;
}
.new-tab {
  margin-left: 33px;
}
.all-tabs {
  margin: 0 27px 0 auto;
}
.nav {
  display: flex;
  align-items: center;
  height: 80px;
  padding: 0 12px;
}
.tool {
  position: relative;
  display: flex;
  justify-content: center;
  width: 72px;
}
.tool.ext {
  width: 80px;
}
.spring {
  flex: 5;
}
.home {
  margin-right: 12px;
}
.tools {
  display: flex;
  margin-left: 12px;
}
.url {
  flex: 39;
  display: flex;
  align-items: center;
  gap: 24px;
  height: 64px;
  padding: 0 16px;
  border-radius: 8px;
  background: #1c1b22;
}
.address {
  flex: 1;
  margin-left: -4px;
  color: #8f8e96;
  font-size: 27px;
}
.address b {
  color: #fbfbfe;
  font-weight: 400;
}
.zoom {
  height: 40px;
  padding: 0 14px;
  border-radius: 6px;
  background: #42414d;
}
.badge {
  position: absolute;
  top: -10px;
  left: 36px;
  width: 28px;
  height: 24px;
  border-radius: 4px;
  background: #34505f;
  font: 20px/24px 'Noto Sans', sans-serif;
  text-align: center;
}
.bookmarks {
  display: flex;
  align-items: center;
  gap: 24px;
  height: 56px;
  padding: 2px 24px 0;
}
.bookmarks a {
  display: flex;
  align-items: center;
  gap: 8px;
  color: inherit;
  text-decoration: none;
  white-space: nowrap;
}
.bookmarks a.wide {
  gap: 16px;
}
.bookmarks a.trail {
  padding-right: 4px;
}
.more {
  margin-left: auto;
}

/* Page */
.page {
  position: relative;
  flex: 1;
  min-height: 0;
  overflow: hidden;
}
.backdrop-art {
  position: absolute;
  inset: 0;
  width: 100%;
  height: 100%;
}
.content {
  position: relative;
  max-width: 2432px;
  margin: 0 auto;
  padding-top: 56px;
}
h1 {
  color: #fff;
  font-size: 60px;
  line-height: 72px;
  text-align: center;
}
.filters {
  display: flex;
  align-items: flex-start;
  gap: 32px;
  margin-top: 132px;
  padding: 48px;
  border-radius: 16px;
  background: #fff;
  box-shadow: 0 4px 8px rgba(0, 0, 0, 0.15);
}
.filters input {
  flex: 1;
  min-width: 0;
  height: 84px;
  padding: 14px 32px 18px;
  border: 2px solid #c4c6cf;
  border-radius: 12px;
  background: none;
  font: 32px/48px 'Liberation Sans', Arial, sans-serif;
}
.filters input::placeholder {
  color: #9ca0ab;
  opacity: 1;
}
.filters button {
  width: 361px;
  height: 80px;
  padding-bottom: 4px;
  border-radius: 12px;
  background: #f1f3f6;
  color: #374151;
  font-size: 32px;
}
.count {
  margin: 64px 0 86px;
  padding-bottom: 4px;
  color: #fff;
  font-size: 32px;
  font-weight: 700;
  line-height: 44px;
}
.list {
  display: flex;
  flex-direction: column;
  gap: 48px;
  padding-right: 16px;
}
.card {
  padding: 48px;
  border-radius: 16px;
  background: #fff;
  box-shadow: 0 4px 10px rgba(0, 0, 0, 0.3);
  color: #4b5563;
}
.card-top {
  display: flex;
  justify-content: space-between;
}
.card h3 {
  padding-bottom: 6px;
  color: #111827;
  font-size: 40px;
  line-height: 50px;
}
.meta {
  display: flex;
  gap: 32px;
  margin-top: 16px;
  color: #4b5563;
}
.meta span,
.openings,
.date {
  display: flex;
  align-items: center;
  gap: 8px;
}
.meta em,
.openings em,
.date em {
  padding-bottom: 4px;
  font-size: 28px;
  line-height: 36px;
}
.ico {
  width: 40px;
  height: 40px;
  fill: none;
  stroke: currentColor;
  stroke-width: 2;
  stroke-linecap: round;
  stroke-linejoin: round;
}
.ico.sm {
  width: 32px;
  height: 32px;
}
.ico.lg {
  width: 48px;
  height: 48px;
}
.pay {
  display: flex;
  flex-direction: column;
  align-items: flex-end;
  gap: 16px;
  color: #6b7280;
}
.pay strong {
  padding-bottom: 4px;
  color: #4ba355;
  font-size: 32px;
  line-height: 44px;
}
.summary {
  display: -webkit-box;
  margin: 54px 0 34px;
  overflow: hidden;
  color: #374151;
  font-size: 32px;
  line-height: 48px;
  -webkit-box-orient: vertical;
  -webkit-line-clamp: 2;
}
.tags,
.skills {
  display: flex;
  flex-wrap: wrap;
  gap: 16px;
}
.tags li {
  padding: 6px 16px 10px;
  border-radius: 24px;
  background: #dee9fb;
  color: #2440ab;
  font-size: 24px;
  line-height: 32px;
}
.details {
  display: grid;
  grid-template-columns: 1fr 1fr;
  gap: 32px;
  margin: 30px 0 34px;
  font-size: 28px;
  line-height: 40px;
}
.details b {
  color: #374151;
  font-weight: 400;
}
.actions {
  display: flex;
  gap: 24px;
  font-size: 32px;
  line-height: 48px;
}
.apply {
  flex: 1;
  padding: 14px 32px 18px;
  border-radius: 12px;
  background: #3861e4;
  color: #fff;
}
.outline {
  padding: 14px 32px 18px;
  border: 2px solid #d1d5db;
  border-radius: 12px;
  color: #374151;
}

/* Dialog */
.overlay {
  position: absolute;
  inset: 0;
  display: flex;
  align-items: center;
  justify-content: center;
  padding: 0 32px;
  background: rgba(0, 0, 0, 0.5);
}
.modal {
  display: flex;
  flex-direction: column;
  width: 100%;
  max-width: 1792px;
  height: 90%;
  overflow: hidden;
  border-radius: 16px;
  background: #fff;
  box-shadow: 0 50px 100px -24px rgba(0, 0, 0, 0.35);
}
.modal-head {
  display: flex;
  align-items: center;
  justify-content: space-between;
  padding: 48px;
  border-bottom: 2px solid #e5e7eb;
  background: linear-gradient(to right, #eff6ff, #eff0fe);
}
.modal-head h2 {
  padding-bottom: 8px;
  color: #111827;
  font-size: 48px;
  line-height: 56px;
}
.dismiss {
  padding: 16px;
  color: #6b7280;
}
.modal-body {
  position: relative;
  flex: 1;
  min-height: 0;
  padding: 48px;
  overflow: hidden;
}
.facts {
  display: grid;
  grid-template-columns: 1fr 1fr;
  gap: 48px;
}
.facts > div {
  display: flex;
  flex-direction: column;
  gap: 32px;
}
.salary {
  padding-bottom: 8px;
  color: #4ba355;
  font-size: 40px;
  font-weight: 700;
  line-height: 48px;
}
.fact {
  display: flex;
  align-items: center;
  gap: 16px;
  color: #374151;
  font-size: 32px;
}
.fact em {
  padding-bottom: 6px;
  line-height: 42px;
}
.modal-body h3 {
  display: flex;
  align-items: center;
  gap: 16px;
  margin: 48px 0 24px;
  color: #111827;
  font-size: 36px;
}
.modal-body h3 span {
  padding-bottom: 6px;
  line-height: 50px;
}
.description {
  margin: -4px 0 52px;
  color: #374151;
  font-size: 32px;
  line-height: 52px;
}
.skills li {
  padding: 6px 24px 10px;
  border-radius: 28px;
  background: #dee9fb;
  color: #2440ab;
  font-size: 28px;
  line-height: 40px;
}
.thumb {
  position: absolute;
  top: 2px;
  right: 4px;
  width: 14px;
  height: 530px;
  border-radius: 7px;
  background: #dcdcdc;
}
.modal-foot {
  display: flex;
  gap: 24px;
  padding: 48px 48px 32px;
  border-top: 2px solid #e5e7eb;
  background: #f9fafc;
  font-size: 32px;
  line-height: 48px;
}
.modal-foot button {
  padding: 22px 48px 26px;
  border-radius: 16px;
}
</style>
